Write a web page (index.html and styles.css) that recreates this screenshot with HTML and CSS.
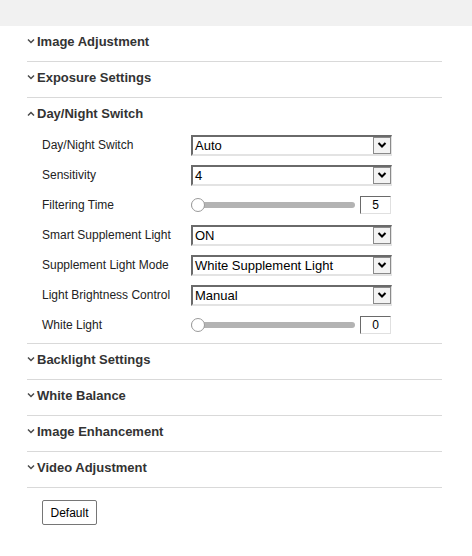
FILE: index.html
```html
<!DOCTYPE html>
<html>
<head>
<meta charset="utf-8">
<link rel="stylesheet" href="styles.css">
</head>
<body>
<div class="topbar"></div>
<div class="panel">
  <div class="section">
    <div class="head"><svg class="chev" viewBox="0 0 8 6"><path d="M1 1.5 L4 4.5 L7 1.5" /></svg>Image Adjustment</div>
  </div>
  <div class="section">
    <div class="head"><svg class="chev" viewBox="0 0 8 6"><path d="M1 1.5 L4 4.5 L7 1.5" /></svg>Exposure Settings</div>
  </div>
  <div class="section open">
    <div class="head short"><svg class="chev" viewBox="0 0 8 6"><path d="M1 4.5 L4 1.5 L7 4.5" /></svg>Day/Night Switch</div>
    <div class="rows">
      <div class="row"><span class="label">Day/Night Switch</span>
        <div class="select"><span class="val">Auto</span><span class="btn"><svg viewBox="0 0 10 8"><path d="M1.5 2 L5 5.5 L8.5 2" /></svg></span></div></div>
      <div class="row"><span class="label">Sensitivity</span>
        <div class="select"><span class="val">4</span><span class="btn"><svg viewBox="0 0 10 8"><path d="M1.5 2 L5 5.5 L8.5 2" /></svg></span></div></div>
      <div class="row"><span class="label">Filtering Time</span>
        <div class="slider"><div class="track"><span class="thumb"></span></div><span class="num">5</span></div></div>
      <div class="row"><span class="label">Smart Supplement Light</span>
        <div class="select"><span class="val">ON</span><span class="btn"><svg viewBox="0 0 10 8"><path d="M1.5 2 L5 5.5 L8.5 2" /></svg></span></div></div>
      <div class="row"><span class="label">Supplement Light Mode</span>
        <div class="select"><span class="val">White Supplement Light</span><span class="btn"><svg viewBox="0 0 10 8"><path d="M1.5 2 L5 5.5 L8.5 2" /></svg></span></div></div>
      <div class="row"><span class="label">Light Brightness Control</span>
        <div class="select"><span class="val">Manual</span><span class="btn"><svg viewBox="0 0 10 8"><path d="M1.5 2 L5 5.5 L8.5 2" /></svg></span></div></div>
      <div class="row"><span class="label">White Light</span>
        <div class="slider"><div class="track"><span class="thumb"></span></div><span class="num">0</span></div></div>
    </div>
  </div>
  <div class="section">
    <div class="head"><svg class="chev" viewBox="0 0 8 6"><path d="M1 1.5 L4 4.5 L7 1.5" /></svg>Backlight Settings</div>
  </div>
  <div class="section">
    <div class="head"><svg class="chev" viewBox="0 0 8 6"><path d="M1 1.5 L4 4.5 L7 1.5" /></svg>White Balance</div>
  </div>
  <div class="section">
    <div class="head"><svg class="chev" viewBox="0 0 8 6"><path d="M1 1.5 L4 4.5 L7 1.5" /></svg>Image Enhancement</div>
  </div>
  <div class="section">
    <div class="head"><svg class="chev" viewBox="0 0 8 6"><path d="M1 1.5 L4 4.5 L7 1.5" /></svg>Video Adjustment</div>
  </div>
  <div class="actions"><button class="default">Default</button></div>
</div>
</body>
</html>
```
FILE: styles.css
```css
html, body {
  margin: 0;
  padding: 0;
  background: #ffffff;
  font-family: "Liberation Sans", Arial, sans-serif;
}
.topbar {
  height: 26px;
  background: #f1f1f1;
}
.panel {
  margin-left: 27px;
  width: 415px;
}
.section {
  border-bottom: 1px solid #d9d9d9;
}
.head {
  height: 35px;
  display: flex;
  align-items: center;
  padding-bottom: 5px;
  box-sizing: border-box;
  font-size: 13px;
  font-weight: bold;
  color: #333333;
}
.head.short {
  height: 32px;
  padding-bottom: 1px;
}
.chev {
  width: 8px;
  height: 6px;
  margin-right: 2px;
  fill: none;
  stroke: #4a4a4a;
  stroke-width: 1.5;
}
.rows {
  padding-bottom: 3px;
}
.row {
  height: 30px;
  display: flex;
  align-items: center;
  padding-left: 15px;
}
.label {
  width: 149px;
  font-size: 12px;
  color: #222222;
}
.select {
  width: 201px;
  height: 21px;
  box-sizing: border-box;
  display: flex;
  align-items: center;
  border-top: 2px solid #6a6a6a;
  border-left: 2px solid #6a6a6a;
  border-bottom: 2px solid #e3e3e3;
  border-right: 1px solid #e3e3e3;
  background: #ffffff;
}
.val {
  flex: 1;
  font-size: 13px;
  color: #000000;
  padding-left: 2px;
}
.btn {
  width: 18px;
  height: 17px;
  box-sizing: border-box;
  border: 1px solid #8a8a8a;
  background: #f3f3f3;
  display: flex;
  align-items: center;
  justify-content: center;
  margin-right: 0;
}
.btn svg {
  width: 10px;
  height: 8px;
  fill: none;
  stroke: #000000;
  stroke-width: 2;
}
.slider {
  display: flex;
  align-items: center;
  width: 201px;
}
.track {
  width: 164px;
  height: 6px;
  background: #b3b3b3;
  border-radius: 3px;
  display: flex;
  align-items: center;
}
.thumb {
  width: 12px;
  height: 12px;
  border: 1px solid #9a9a9a;
  border-radius: 50%;
  background: #ffffff;
}
.num {
  width: 31px;
  height: 18px;
  box-sizing: border-box;
  margin-left: 5px;
  border-top: 1px solid #6a6a6a;
  border-left: 1px solid #6a6a6a;
  border-bottom: 1px solid #e0e0e0;
  border-right: 1px solid #e0e0e0;
  font-size: 12px;
  text-align: center;
  line-height: 16px;
  color: #000000;
}
.actions {
  padding: 12px 0 0 15px;
}
.default {
  width: 55px;
  height: 25px;
  font-family: "Liberation Sans", Arial, sans-serif;
  font-size: 12px;
  color: #000000;
  background: #ffffff;
  border: 1px solid #767676;
  border-radius: 2px;
  padding: 0;
}
```
